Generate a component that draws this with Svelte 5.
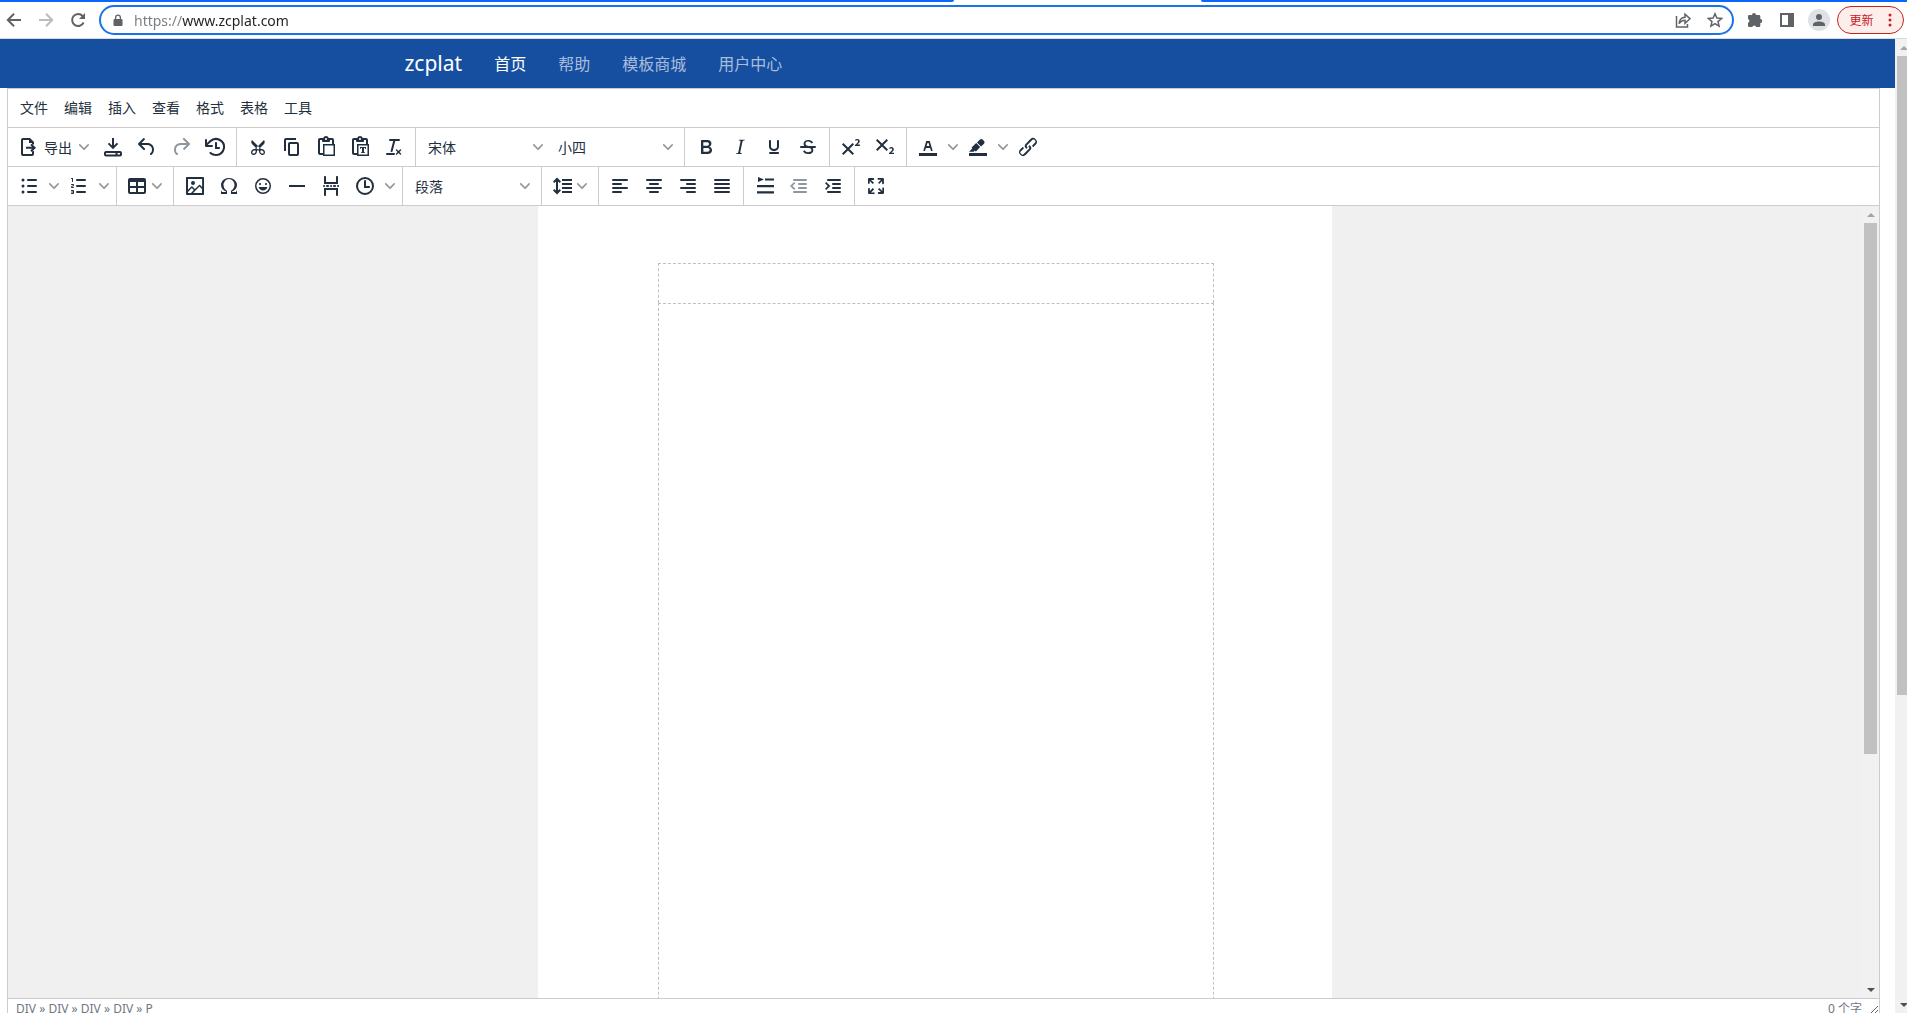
<script>
  const menus = ["文件", "编辑", "插入", "查看", "格式", "表格", "工具"]
  const links = ["首页", "帮助", "模板商城", "用户中心"]

  // 24x24 toolbar icons, "|" separates overlapping paths
  const icons = {
    export:
      "M5 5a2 2 0 0 1 2-2h7l4 4v2.5h-2V8h-3V5H7v14h9v-3h2v3a2 2 0 0 1-2 2H7a2 2 0 0 1-2-2zM10 11.8h6l-1.7-1.7 1.3-1.4 4.4 4.1-4.4 4.1-1.3-1.4 1.7-1.7h-6z",
    save: "M11 3h2v7.5l2.8-2.8 1.4 1.4L12 14.3 6.8 9.1l1.4-1.4L11 10.5zM5 16h14a2 2 0 0 1 2 2v1.5a2 2 0 0 1-2 2H5a2 2 0 0 1-2-2V18c0-1.1.9-2 2-2zm0 2v1.500h9.500V18zm11.500 0v1.500H19V18z",
    undo: "M6.4 8H12c3.7 0 6.2 2 6.8 5.1.6 2.7-.4 5.6-2.3 6.8a1 1 0 0 1-1-1.8c1.1-.6 1.8-2.7 1.4-4.6-.5-2.1-2.1-3.5-4.9-3.5H6.4l3.3 3.3a1 1 0 1 1-1.4 1.4l-5-5a1 1 0 0 1 0-1.4l5-5a1 1 0 0 1 1.4 1.4L6.4 8z",
    redo: "M17.6 10H12c-2.8 0-4.4 1.4-4.9 3.5-.4 2 .3 4 1.4 4.6a1 1 0 1 1-1 1.8c-2-1.2-2.9-4.1-2.3-6.8.6-3 3-5.1 6.8-5.1h5.6l-3.3-3.3a1 1 0 1 1 1.4-1.4l5 5a1 1 0 0 1 0 1.4l-5 5a1 1 0 0 1-1.4-1.4l3.3-3.3z",
    history:
      "M17 13c0 .6-.4 1-1 1h-4V8c0-.6.4-1 1-1s1 .4 1 1v4h2c.6 0 1 .4 1 1z|M4.7 10H9a1 1 0 0 1 0 2H3a1 1 0 0 1-1-1V5a1 1 0 1 1 2 0v3l2.5-2.4a9.2 9.2 0 0 1 10.8-1.5A9 9 0 0 1 13.4 21c-2.4.1-4.7-.7-6.5-2.2a1 1 0 1 1 1.3-1.5 7.2 7.2 0 0 0 11.6-3.7 7 7 0 0 0-3.5-7.7A7.2 7.2 0 0 0 8 7L4.7 10z",
    cut: "M18 15c.6.7 1 1.4 1 2.3 0 .8-.2 1.5-.7 2l-.8.5-1 .2c-.4 0-.8 0-1.2-.3a3.9 3.9 0 0 1-2.1-2.2c-.2-.5-.3-1-.2-1.5l-1-1-1 1c0 .5 0 1-.2 1.5-.1.5-.4 1-.9 1.4-.3.4-.7.6-1.2.8l-1.2.3c-.4 0-.7 0-1-.2-.3 0-.6-.3-.8-.5-.5-.5-.8-1.2-.7-2 0-.9.4-1.6 1-2.2A3.7 3.7 0 0 1 8.6 14H9l1-1-4-4-.5-1a3.3 3.3 0 0 1 0-2c0-.4.3-.7.5-1l6 6 6-6 .5 1a3.3 3.3 0 0 1 0 2c0 .4-.3.7-.5 1l-4 4 1 1h.5c.4 0 .8 0 1.2.3.5.2.9.4 1.2.8zm-8.5 2.2l.1-.4v-.7a1 1 0 0 0-.2-.5 1 1 0 0 0-.4-.2 1.6 1.6 0 0 0-.8 0 2.6 2.6 0 0 0-.8.3 2.5 2.5 0 0 0-.9 1.1l-.1.4v.7l.2.5.5.2h.7a2.5 2.5 0 0 0 .8-.3 2.8 2.8 0 0 0 .9-1.1zm2.5-2.8c.4 0 .7-.1 1-.4.3-.3.4-.6.4-1s-.1-.7-.4-1c-.3-.3-.6-.4-1-.4s-.7.1-1 .4c-.3.3-.4.6-.4 1s.1.7.4 1c.3.3.6.4 1 .4zm5.4 4l.2-.5v-.7a2.6 2.6 0 0 0-.3-.8 2.4 2.4 0 0 0-.7-.7 2.5 2.5 0 0 0-.8-.3 1.5 1.5 0 0 0-.8 0 1 1 0 0 0-.4.2 1 1 0 0 0-.2.5 1.5 1.5 0 0 0 0 .7v.4l.3.4.3.4a2.8 2.8 0 0 0 .8.5l.4.1h.7l.5-.2z",
    copy: "M16 3H6a2 2 0 0 0-2 2v11h2V5h10V3zm1 4a2 2 0 0 1 2 2v10a2 2 0 0 1-2 2h-7a2 2 0 0 1-2-2V9c0-1.2.9-2 2-2h7zm0 12V9h-7v10h7z",
    paste:
      "M18 9V5h-2v1c0 .6-.4 1-1 1H9a1 1 0 0 1-1-1V5H6v13h3V9h9zM9 20H6a2 2 0 0 1-2-2V5c0-1.1.9-2 2-2h3.2A3 3 0 0 1 12 1a3 3 0 0 1 2.8 2H18a2 2 0 0 1 2 2v4h1v12H9v-1zm1.5-9.5v9h9v-9h-9zM12 3a1 1 0 0 0-1 1c0 .5.4 1 1 1s1-.5 1-1-.4-1-1-1z",
    pasteText:
      "M18 9V5h-2v1c0 .6-.4 1-1 1H9a1 1 0 0 1-1-1V5H6v13h3V9h9zM9 20H6a2 2 0 0 1-2-2V5c0-1.1.9-2 2-2h3.2A3 3 0 0 1 12 1a3 3 0 0 1 2.8 2H18a2 2 0 0 1 2 2v4h1v12H9v-1zm1.5-9.5v9h9v-9h-9zM12 3a1 1 0 0 0-1 1c0 .5.4 1 1 1s1-.5 1-1-.4-1-1-1zm0 9h6v2h-.5l-.5-1h-1v4h.8v1h-3.6v-1h.8v-4h-1l-.5 1H12v-2z",
    clear:
      "M13.2 6a1 1 0 0 1 0 .2l-2.6 10a1 1 0 0 1-1 .8h-.2a.8.8 0 0 1-.8-1l2.6-10H8a1 1 0 1 1 0-2h9a1 1 0 0 1 0 2h-3.8zM5 18h7a1 1 0 0 1 0 2H5a1 1 0 0 1 0-2zm13 1.5L16.5 18 15 19.5a.7.7 0 0 1-1-1l1.5-1.5-1.5-1.5a.7.7 0 0 1 1-1l1.5 1.5 1.5-1.5a.7.7 0 0 1 1 1L17.5 17l1.5 1.5a.7.7 0 0 1-1 1z",
    bold: "M7.8 19c-.3 0-.5 0-.6-.2l-.2-.5V5.7c0-.2 0-.4.2-.5l.6-.2h5c1.5 0 2.7.3 3.5 1 .7.6 1.1 1.4 1.1 2.5a3 3 0 0 1-.6 1.9c-.4.6-1 1-1.6 1.2.4.1.9.3 1.3.6s.8.7 1 1.2c.4.4.5 1 .5 1.6 0 1.3-.4 2.3-1.3 3-.8.7-2.1 1-3.8 1H7.8zm5-8.3c.6 0 1.2-.1 1.6-.5.4-.3.6-.7.6-1.3 0-1.1-.8-1.7-2.3-1.7H9.3v3.5h3.4zm.5 6c.7 0 1.3-.1 1.7-.4.4-.4.6-.9.6-1.5s-.2-1-.7-1.4c-.4-.3-1-.4-2-.4H9.4v3.8h4z",
    italic:
      "M16.7 4.7l-.1.9h-.3c-.6 0-1 0-1.4.3-.3.3-.4.6-.5 1.1l-2.1 9.8v.6c0 .5.4.8 1.4.8h.2l-.2.8H8l.2-.8h.2c1.1 0 1.8-.5 2-1.5l2-9.8.1-.5c0-.6-.4-.8-1.4-.8h-.3l.2-.9h5.8z",
    underline:
      "M16 5c.6 0 1 .4 1 1v5.5a4 4 0 0 1-.4 1.8l-1 1.4a5.3 5.3 0 0 1-5.5 1 5 5 0 0 1-1.6-1c-.5-.4-.8-.9-1.1-1.4a4 4 0 0 1-.4-1.8V6c0-.6.4-1 1-1s1 .4 1 1v5.5c0 .3 0 .6.2 1l.6.7a3.3 3.3 0 0 0 2.2.8 3.4 3.4 0 0 0 2.2-.8c.3-.2.4-.5.6-.8l.2-.9V6c0-.6.4-1 1-1zM8 17h8c.6 0 1 .4 1 1s-.4 1-1 1H8a1 1 0 0 1 0-2z",
    strike:
      "M15.6 8.5c-.5-.7-1-1.1-1.3-1.3-.6-.4-1.3-.6-2-.6-2.7 0-2.8 1.7-2.8 2.1 0 1.6 1.8 2 3.2 2.3 4.4.9 4.6 2.8 4.6 3.9 0 1.4-.7 4.1-5 4.1A6.2 6.2 0 0 1 7 16.4l1.5-1.1c.4.6 1.6 2 3.7 2 1.6 0 2.5-.4 3-1.2.4-.8.3-2-.8-2.6-.7-.4-1.6-.7-2.9-1-1-.2-3.9-.8-3.9-3.6C7.6 6 10.3 5 12.4 5c2.9 0 4.2 1.6 4.7 2.4l-1.5 1.1z|M5 11h14a1 1 0 0 1 0 2H5a1 1 0 0 1 0-2z",
    sup: "M15 9.4L10.4 14l4.6 4.6-1.4 1.4L9 15.4 4.4 20 3 18.6 7.6 14 3 9.4 4.4 8 9 12.6 13.6 8 15 9.4zm5.9 1.6h-5v-1l1-.8 1.7-1.6c.3-.5.5-.9.5-1.3 0-.3 0-.5-.2-.7-.2-.2-.5-.3-.9-.3l-.8.2-.7.4-.4-1.2c.2-.2.5-.4 1-.5.3-.2.8-.2 1.2-.2.8 0 1.4.2 1.8.6.4.4.6 1 .6 1.6 0 .5-.2 1-.5 1.5l-1.3 1.4-.6.5h2.6V11z",
    sub: "M10.4 10l4.6 4.6-1.4 1.4L9 11.4 4.4 16 3 14.6 7.6 10 3 5.4 4.4 4 9 8.6 13.6 4 15 5.4 10.4 10zM21 19h-5v-1l1-.8 1.7-1.6c.4-.4.5-.8.5-1.2 0-.3 0-.6-.2-.7-.2-.2-.5-.3-.9-.3a2 2 0 0 0-.8.2l-.7.3-.4-1.1 1-.6 1.2-.2c.8 0 1.4.3 1.8.7.4.4.6.9.6 1.5s-.2 1.1-.5 1.6a8 8 0 0 1-1.3 1.3l-.6.6h2.6V19z",
    color:
      "M3 18h18v3H3zM8.7 16h-.8a.5.5 0 0 1-.5-.6l2.7-9c.1-.3.3-.4.5-.4h2.8c.2 0 .4.1.5.4l2.7 9a.5.5 0 0 1-.5.6h-.8a.5.5 0 0 1-.4-.4l-.7-2.2c0-.3-.3-.4-.5-.4h-3.4c-.2 0-.4.1-.5.4l-.7 2.2c0 .3-.2.4-.4.4zm2.6-7.6l-.6 2a.5.5 0 0 0 .5.6h1.6a.5.5 0 0 0 .5-.6l-.6-2c0-.3-.3-.4-.5-.4h-.4c-.2 0-.4.1-.5.4z",
    highlight:
      "M3 18h18v3H3z|M7.7 16.7H3l3.3-3.3-.7-.8L10.2 8l4 4.1-4 4.2c-.2.2-.6.2-.8 0l-.6-.7-1.1 1.1z|M12.7 9.2L11 7.4l3-2.9a2 2 0 0 1 2.6 0L18 6c.7.7.7 2 0 2.7l-2.9 2.9-1.8-1.8-.5-.6",
    link: "M6.2 12.3a1 1 0 0 1 1.4 1.4l-2.1 2a2 2 0 1 0 2.7 2.8l4.8-4.8a1 1 0 0 0 0-1.4 1 1 0 1 1 1.4-1.3 2.9 2.9 0 0 1 0 4L9.6 20a3.9 3.9 0 0 1-5.5-5.5l2-2zm11.6-.6a1 1 0 0 1-1.4-1.4l2-2a2 2 0 1 0-2.6-2.8L11 10.3a1 1 0 0 0 0 1.4A1 1 0 1 1 9.6 13a2.9 2.9 0 0 1 0-4L14.4 4a3.9 3.9 0 0 1 5.5 5.5l-2 2z",
    ul: "M11 5h8a1 1 0 0 1 0 2h-8a1 1 0 0 1 0-2zm0 6h8a1 1 0 0 1 0 2h-8a1 1 0 0 1 0-2zm0 6h8a1 1 0 0 1 0 2h-8a1 1 0 0 1 0-2zM6 4.5a1.5 1.5 0 1 1 0 3 1.5 1.5 0 0 1 0-3zm0 6a1.5 1.5 0 1 1 0 3 1.5 1.5 0 0 1 0-3zm0 6a1.5 1.5 0 1 1 0 3 1.5 1.5 0 0 1 0-3z",
    ol: "M10 17h8a1 1 0 0 1 0 2h-8a1 1 0 0 1 0-2zm0-6h8a1 1 0 0 1 0 2h-8a1 1 0 0 1 0-2zm0-6h8a1 1 0 0 1 0 2h-8a1 1 0 1 1 0-2zM6 4v3.5c0 .3-.2.5-.5.5a.5.5 0 0 1-.5-.5V5h-.5a.5.5 0 0 1 0-1H6zm-1 8.8l.2.2h1.3c.3 0 .5.2.5.5s-.2.5-.5.5H4.9a1 1 0 0 1-.9-1V13c0-.4.3-.8.6-1l1.2-.4.2-.3a.2.2 0 0 0-.2-.2H4.5a.5.5 0 0 1-.5-.5c0-.3.2-.5.5-.5h1.6c.5 0 .9.4.9 1v.1c0 .4-.3.8-.6 1l-1.2.4-.2.3zM7 17v2c0 .6-.4 1-1 1H4.5a.5.5 0 0 1 0-1h1.2c.2 0 .3-.1.3-.3 0-.2-.1-.3-.3-.3H4.4a.4.4 0 1 1 0-.8h1.3c.2 0 .3-.1.3-.3 0-.2-.1-.3-.3-.3H4.5a.5.5 0 1 1 0-1H6c.6 0 1 .4 1 1z",
    table:
      "M19 4a2 2 0 0 1 2 2v12a2 2 0 0 1-2 2H5a2 2 0 0 1-2-2V6c0-1.1.9-2 2-2h14zM5 14v4h6v-4H5zm14 0h-6v4h6v-4zm0-6h-6v4h6V8zM5 12h6V8H5v4z",
    image:
      "M5 15.7l3.3-3.2c.3-.3.7-.3 1 0L12 15l4.1-4c.3-.4.8-.4 1 0l2 1.9V5H5v10.7zM5 18V19h3l2.8-2.9-2-2L5 17.9zm14-3l-2.5-2.4-6.4 6.5H19v-4zM4 3h16c.6 0 1 .4 1 1v16c0 .6-.4 1-1 1H4a1 1 0 0 1-1-1V4c0-.6.4-1 1-1zm6 8a2 2 0 1 0 0-4 2 2 0 0 0 0 4z",
    omega:
      "M15 18h4l1-2v4h-6v-3.3l1.4-1a6 6 0 0 0 1.8-2.9 6.3 6.3 0 0 0-.1-4.1 5.8 5.8 0 0 0-3-3.2c-.6-.3-1.3-.5-2.1-.5a5.1 5.1 0 0 0-3.9 1.8 6.3 6.3 0 0 0-1.3 6 6.2 6.2 0 0 0 1.8 3l1.4.9V20H4v-4l1 2h4v-.5l-2-1L5.4 15A6.5 6.5 0 0 1 4 11c0-1 .2-1.9.6-2.7A7 7 0 0 1 7.8 5 8.2 8.2 0 0 1 12 4c1.5 0 3 .3 4.2 1a7 7 0 0 1 3.1 3.3c.5.8.7 1.7.7 2.7a6.5 6.5 0 0 1-1.4 4L17 16.6l-2 1v.5z",
    emoji:
      "M9 11c.6 0 1-.4 1-1s-.4-1-1-1a1 1 0 0 0-1 1c0 .6.4 1 1 1zm6 0c.6 0 1-.4 1-1s-.4-1-1-1a1 1 0 0 0-1 1c0 .6.4 1 1 1zm-3 5.5c2.1 0 4-1.5 4.4-3.5H7.6c.5 2 2.3 3.5 4.4 3.5zM12 4a8 8 0 1 0 0 16 8 8 0 0 0 0-16zm0 14.5a6.5 6.5 0 1 1 0-13 6.5 6.5 0 0 1 0 13z",
    hr: "M4 11h16v2H4z",
    pageBreak:
      "M5 11c.6 0 1 .4 1 1s-.4 1-1 1a1 1 0 0 1 0-2zm3 0h1c.6 0 1 .4 1 1s-.4 1-1 1H8a1 1 0 0 1 0-2zm4 0c.6 0 1 .4 1 1s-.4 1-1 1a1 1 0 0 1 0-2zm3 0h1c.6 0 1 .4 1 1s-.4 1-1 1h-1a1 1 0 0 1 0-2zm4 0c.6 0 1 .4 1 1s-.4 1-1 1a1 1 0 0 1 0-2zM7 3v5h10V3c0-.6.4-1 1-1s1 .4 1 1v7H5V3c0-.6.4-1 1-1s1 .4 1 1zM6 22a1 1 0 0 1-1-1v-7h14v7c0 .6-.4 1-1 1a1 1 0 0 1-1-1v-5H7v5c0 .6-.4 1-1 1z",
    time: "M12 19a7 7 0 1 0 0-14 7 7 0 0 0 0 14zm0 2a9 9 0 1 1 0-18 9 9 0 0 1 0 18z|M16 12h-3V7c0-.6-.4-1-1-1a1 1 0 0 0-1 1v7h5c.6 0 1-.4 1-1s-.4-1-1-1z",
    lineHeight:
      "M12 5h10v2H12zm0 4h10v2H12zm0 4h10v2H12zm0 4h10v2H12z|M7 3.5l4 4-1.3 1.6L8 7.4v9.2l1.7-1.7 1.3 1.6-4 4-4-4 1.3-1.6L6 16.600V7.400L4.300 9.100 3 7.500z",
    left: "M5 5h14a1 1 0 0 1 0 2H5a1 1 0 0 1 0-2zm0 4h8a1 1 0 0 1 0 2H5a1 1 0 0 1 0-2zm0 4h14a1 1 0 0 1 0 2H5a1 1 0 0 1 0-2zm0 4h8a1 1 0 0 1 0 2H5a1 1 0 0 1 0-2z",
    center:
      "M5 5h14a1 1 0 0 1 0 2H5a1 1 0 0 1 0-2zm3 4h8a1 1 0 0 1 0 2H8a1 1 0 0 1 0-2zm-3 4h14a1 1 0 0 1 0 2H5a1 1 0 0 1 0-2zm3 4h8a1 1 0 0 1 0 2H8a1 1 0 0 1 0-2z",
    right:
      "M5 5h14a1 1 0 0 1 0 2H5a1 1 0 0 1 0-2zm6 4h8a1 1 0 0 1 0 2h-8a1 1 0 0 1 0-2zm-6 4h14a1 1 0 0 1 0 2H5a1 1 0 0 1 0-2zm6 4h8a1 1 0 0 1 0 2h-8a1 1 0 0 1 0-2z",
    justify:
      "M5 5h14a1 1 0 0 1 0 2H5a1 1 0 0 1 0-2zm0 4h14a1 1 0 0 1 0 2H5a1 1 0 0 1 0-2zm0 4h14a1 1 0 0 1 0 2H5a1 1 0 0 1 0-2zm0 4h14a1 1 0 0 1 0 2H5a1 1 0 0 1 0-2z",
    firstLine: "M5 3l6 2.5L5 8zM12 4.500h9v2h-9zM4 11h17v2.200H4zM4 17.300h17v2.200H4z",
    outdent:
      "M7 5h12a1 1 0 0 1 0 2H7a1 1 0 0 1 0-2zm5 4h7a1 1 0 0 1 0 2h-7a1 1 0 0 1 0-2zm0 4h7a1 1 0 0 1 0 2h-7a1 1 0 0 1 0-2zm-5 4h12a1 1 0 0 1 0 2H7a1 1 0 0 1 0-2zM8.300 9.200L5.500 12l2.800 2.800-1.200 1.200L3 12l4.100-4z",
    indent:
      "M7 5h12a1 1 0 0 1 0 2H7a1 1 0 0 1 0-2zm5 4h7a1 1 0 0 1 0 2h-7a1 1 0 0 1 0-2zm0 4h7a1 1 0 0 1 0 2h-7a1 1 0 0 1 0-2zm-5 4h12a1 1 0 0 1 0 2H7a1 1 0 0 1 0-2zM4 14.800L6.800 12 4 9.200 5.200 8l4.100 4-4.100 4z",
    fullscreen:
      "M15.3 10l-1.2-1.3 2.9-3h-2.3a.9.9 0 1 1 0-1.7H19c.5 0 .9.4.9.9v4.4a.9.9 0 1 1-1.8 0V7l-2.9 3zm0 4l3 3v-2.3a.9.9 0 1 1 1.7 0V19c0 .5-.4.9-.9.9h-4.4a.9.9 0 1 1 0-1.8H17l-3-2.9 1.3-1.2zM10 15.4l-2.9 3h2.3a.9.9 0 1 1 0 1.7H5a.9.9 0 0 1-.9-.9v-4.4a.9.9 0 1 1 1.8 0V17l2.9-3 1.2 1.3zM8.7 10L5.7 7v2.3a.9.9 0 0 1-1.7 0V5c0-.5.4-.9.9-.9h4.4a.9.9 0 0 1 0 1.8H7l3 2.9-1.3 1.2z",
  }

  const toolbars = [
    [
      [
        { icon: "export", title: "导出", text: "导出", menu: true },
        { icon: "save", title: "保存" },
        { icon: "undo", title: "撤销" },
        { icon: "redo", title: "重做", disabled: true },
        { icon: "history", title: "恢复草稿" },
      ],
      [
        { icon: "cut", title: "剪切" },
        { icon: "copy", title: "复制" },
        { icon: "paste", title: "粘贴" },
        { icon: "pasteText", title: "粘贴为文本" },
        { icon: "clear", title: "清除格式" },
      ],
      [
        { select: ["宋体", "黑体", "楷体"], title: "字体" },
        { select: ["小四", "四号", "五号"], title: "字号" },
      ],
      [
        { icon: "bold", title: "粗体" },
        { icon: "italic", title: "斜体" },
        { icon: "underline", title: "下划线" },
        { icon: "strike", title: "删除线" },
      ],
      [
        { icon: "sup", title: "上标" },
        { icon: "sub", title: "下标" },
      ],
      [
        { icon: "color", title: "文字颜色", split: true },
        { icon: "highlight", title: "背景色", split: true },
        { icon: "link", title: "链接" },
      ],
    ],
    [
      [
        { icon: "ul", title: "项目符号", split: true },
        { icon: "ol", title: "编号列表", split: true },
      ],
      [{ icon: "table", title: "表格", menu: true }],
      [
        { icon: "image", title: "图片" },
        { icon: "omega", title: "特殊字符" },
        { icon: "emoji", title: "表情" },
        { icon: "hr", title: "水平线" },
        { icon: "pageBreak", title: "分页符" },
        { icon: "time", title: "日期时间", split: true },
      ],
      [{ select: ["段落", "标题1", "标题2"], title: "段落格式" }],
      [{ icon: "lineHeight", title: "行高", menu: true }],
      [
        { icon: "left", title: "左对齐" },
        { icon: "center", title: "居中" },
        { icon: "right", title: "右对齐" },
        { icon: "justify", title: "两端对齐" },
      ],
      [
        { icon: "firstLine", title: "首行缩进" },
        { icon: "outdent", title: "减少缩进", disabled: true },
        { icon: "indent", title: "增加缩进" },
      ],
      [{ icon: "fullscreen", title: "全屏" }],
    ],
  ]
</script>

{#snippet icon(name)}
  <svg class="icon" viewBox="0 0 24 24" fill-rule="evenodd">
    {#each icons[name].split("|") as d}
      <path {d} />
    {/each}
  </svg>
{/snippet}

{#snippet chevron()}
  <svg class="chevron" viewBox="0 0 10 10">
    <path
      d="M8.7 2.2c.3-.3.8-.3 1 0 .4.4.4.9 0 1.2L5.7 7.8c-.3.3-.9.3-1.2 0L.2 3.4a.8.8 0 0 1 0-1.2c.3-.3.8-.3 1.1 0L5 6l3.7-3.8z"
    />
  </svg>
{/snippet}

{#snippet scrollbar(size)}
  <div class="scrollbar" aria-hidden="true">
    <span class="arrow up"></span>
    <div class="track"><div class="thumb" style="height: {size}%"></div></div>
    <span class="arrow down"></span>
  </div>
{/snippet}

<div class="window">
  <header class="browser">
    <div class="tabs"><i></i><i></i></div>
    <div class="bar">
      <div class="nav-buttons">
        <button aria-label="后退">
          <svg viewBox="0 0 16 16"><path d="M15 8H2.500M8 1.800L1.800 8 8 14.200" /></svg>
        </button>
        <button aria-label="前进" class="off">
          <svg viewBox="0 0 16 16"><path d="M1 8h12.500M8 1.800L14.200 8 8 14.200" /></svg>
        </button>
        <button aria-label="刷新">
          <svg viewBox="0 0 16 16">
            <path d="M13.600 10.500A6 6 0 1 1 12.600 4" />
            <path class="solid" d="M15 1v6H9z" />
          </svg>
        </button>
      </div>
      <div class="address">
        <svg class="lock" viewBox="0 0 10 12">
          <path d="M1.500 5H2V3.500a3 3 0 0 1 6 0V5h.5A1 1 0 0 1 9.500 6v5a1 1 0 0 1-1 1h-7a1 1 0 0 1-1-1V6a1 1 0 0 1 1-1zM3.300 5h3.400V3.500a1.700 1.700 0 0 0-3.400 0z" />
        </svg>
        <input aria-label="地址" value="https://www.zcplat.com" />
        <button aria-label="分享">
          <svg viewBox="0 0 16 16">
            <path class="thin" d="M1.500 4v11h11v-3M4 11.500c.5-4 2.500-6 6-6.200V2.200l5 4.500-5 4.500V8.300c-2.600 0-4.500 1-6 3.200z" />
          </svg>
        </button>
        <button aria-label="收藏">
          <svg viewBox="0 0 16 16">
            <path class="thin" d="M8 1.800l1.900 4.300 4.700.4-3.600 3.100 1.100 4.600L8 11.700l-4.100 2.500L5 9.600 1.400 6.500l4.700-.4z" />
          </svg>
        </button>
      </div>
      <div class="tools">
        <button aria-label="扩展程序">
          <svg viewBox="0 0 16 16">
            <path class="fill" d="M5 3a2 2 0 0 1 4 0h3a1.300 1.300 0 0 1 1.300 1.300V7a2 2 0 0 1 0 4v2.700A1.300 1.300 0 0 1 12 15H9.200a2 2 0 0 0-3.900 0H2.400A1.300 1.300 0 0 1 1 13.700v-3a2 2 0 0 0 0-3.800V4.300A1.300 1.300 0 0 1 2.400 3z" />
          </svg>
        </button>
        <button aria-label="侧边栏">
          <svg viewBox="0 0 16 16"><path class="fill" fill-rule="evenodd" d="M1 1h14v14H1zm2 2v10h6V3z" /></svg>
        </button>
        <button aria-label="账户" class="avatar">
          <svg viewBox="0 0 16 16"><circle cx="8" cy="5" r="3" /><path class="fill" d="M2 14v-1.500C2 10.500 5 9.400 8 9.400s6 1.100 6 3.100V14z" /></svg>
        </button>
        <button class="update">更新<svg viewBox="0 0 4 14"><circle cx="2" cy="2" r="1.500" /><circle cx="2" cy="7" r="1.500" /><circle cx="2" cy="12" r="1.500" /></svg></button>
      </div>
    </div>
  </header>

  <div class="viewport">
    <div class="site">
      <nav>
        <div class="container">
          <a class="brand" href="#top">zcplat</a>
          {#each links as link, i}
            <a href="#top" class:active={i === 0}>{link}</a>
          {/each}
        </div>
      </nav>

      <main class="editor">
        <div class="menubar">
          {#each menus as menu}
            <button>{menu}</button>
          {/each}
        </div>

        {#each toolbars as groups}
          <div class="toolbar">
            {#each groups as items}
              <div class="group">
                {#each items as item}
                  {#if item.select}
                    <label class="select">
                      <select aria-label={item.title}>
                        {#each item.select as option}
                          <option>{option}</option>
                        {/each}
                      </select>
                      {@render chevron()}
                    </label>
                  {:else}
                    <button class="tbtn" class:menu={item.menu} title={item.title} disabled={item.disabled}>
                      {@render icon(item.icon)}
                      {#if item.text}<span>{item.text}</span>{/if}
                      {#if item.menu}{@render chevron()}{/if}
                    </button>
                    {#if item.split}
                      <button class="split" aria-label="{item.title}选项">{@render chevron()}</button>
                    {/if}
                  {/if}
                {/each}
              </div>
            {/each}
          </div>
        {/each}

        <div class="canvas">
          <div class="desk">
            <div class="page">
              <div class="page-header"></div>
              <div class="page-body"></div>
            </div>
          </div>
          {@render scrollbar(70)}
        </div>

        <footer>
          <span>DIV » DIV » DIV » DIV » P</span>
          <span class="count">0 个字</span>
          <svg class="grip" viewBox="0 0 8 8"><path d="M1 8l7-7M5 8l3-3" /></svg>
        </footer>
      </main>
    </div>
    {@render scrollbar(68)}
  </div>
</div>

<style>
  :global(body) {
    margin: 0;
    overflow: hidden;
  }
  .window {
    display: flex;
    flex-direction: column;
    height: 100vh;
    overflow: hidden;
    background: #fff;
    color: #222f3e;
    font-family: "Noto Sans", "Noto Sans CJK SC", sans-serif;
    font-size: 14px;
  }
  button,
  input,
  select {
    margin: 0;
    padding: 0;
    border: 0;
    background: none;
    color: inherit;
    font: inherit;
  }
  button {
    display: flex;
    align-items: center;
    justify-content: center;
  }
  a {
    color: inherit;
    text-decoration: none;
  }

  /* browser chrome */
  .tabs {
    display: flex;
    justify-content: space-between;
    height: 2px;
  }
  .tabs i {
    width: 50%;
    background: #0b66fb;
    border-bottom-right-radius: 4px;
  }
  .tabs i + i {
    width: 37%;
    border-radius: 0 0 0 4px;
  }
  .bar {
    display: flex;
    align-items: center;
    height: 36px;
    border-bottom: 1px solid #d8dadd;
  }
  .nav-buttons {
    display: flex;
    gap: 16px;
    padding: 0 13px 0 6px;
  }
  .bar button svg {
    width: 16px;
    height: 16px;
    fill: none;
    stroke: #5f6368;
    stroke-width: 2;
  }
  .bar .off svg {
    stroke: #babcbe;
  }
  .bar .solid {
    fill: #5f6368;
    stroke: none;
  }
  .bar .thin {
    stroke-width: 1.5;
  }
  .bar .fill,
  .bar circle {
    fill: #5f6368;
    stroke: none;
  }
  .address {
    display: flex;
    flex: 1;
    align-items: center;
    gap: 16px;
    height: 26px;
    padding: 0 9px 0 12px;
    border: 2px solid #1a73e8;
    border-radius: 15px;
  }
  .lock {
    width: 10px;
    height: 12px;
    margin-right: -5px;
    fill: #5f6368;
  }
  /* scheme is grey, host is dark */
  .address input {
    flex: 1;
    min-width: 0;
    height: 24px;
    outline: 0;
    background: linear-gradient(90deg, #777b80 48px, #202124 48px) text;
    color: transparent;
  }
  .tools {
    display: flex;
    align-items: center;
    gap: 16px;
    padding: 0 3px 0 13px;
  }
  .bar .avatar {
    width: 22px;
    height: 22px;
    margin: 0 -9px 0 -3px;
    border-radius: 50%;
    background: #dee1e6;
  }
  .update {
    gap: 14px;
    width: 67px;
    height: 28px;
    box-sizing: border-box;
    border: 1px solid #c5221f;
    border-radius: 14px;
    background: #fdeeec;
    color: #c5221f;
    font-size: 12px;
  }
  .bar .update svg {
    width: 4px;
    height: 14px;
  }
  .bar .update circle {
    fill: #c5221f;
  }

  /* scrollbars */
  .scrollbar {
    display: flex;
    flex: 0 0 17px;
    flex-direction: column;
    background: #f1f1f1;
  }
  .track {
    flex: 1;
    padding: 0 2px;
  }
  .thumb {
    background: #c1c1c1;
  }
  .arrow {
    display: flex;
    align-items: center;
    justify-content: center;
    height: 17px;
  }
  .arrow::before {
    content: "";
    border: 4px solid transparent;
    border-top: 0;
    border-bottom-color: #a3a3a3;
  }
  .arrow.down::before {
    border-top: 4px solid #505050;
    border-bottom: 0;
  }

  /* site */
  .viewport {
    display: flex;
    flex: 1;
    min-height: 0;
    margin-right: -5px;
  }
  .site {
    display: flex;
    flex: 1;
    flex-direction: column;
    min-width: 0;
  }
  nav {
    background: #164fa0;
  }
  .container {
    display: flex;
    align-items: center;
    gap: 32px;
    max-width: 1086px;
    height: 47px;
    margin: 0 auto;
    padding-bottom: 2px;
    color: #a8bddd;
    font-size: 16px;
  }
  .container .active,
  .container .brand {
    color: #fff;
  }
  .brand {
    font-size: 21px;
  }

  .editor {
    display: flex;
    flex: 1;
    flex-direction: column;
    min-height: 0;
    margin: 0 15px 0 7px;
    border: solid #ccc;
    border-width: 1px 1px 0;
  }
  .menubar,
  .toolbar {
    display: flex;
    height: 38px;
    border-bottom: 1px solid #ccc;
  }
  .menubar {
    padding: 0 4px;
  }
  .menubar button {
    padding: 0 8px 2px;
  }
  .group {
    display: flex;
    align-items: center;
    padding: 0 4px;
    border-right: 1px solid #ccc;
  }
  .group:last-child {
    border-right: 0;
  }
  .tbtn {
    width: 34px;
    height: 34px;
  }
  .tbtn.menu {
    width: auto;
    padding: 0 4px;
  }
  .tbtn span {
    margin: 0 4px;
  }
  .icon {
    width: 24px;
    height: 24px;
    fill: #222f3e;
  }
  .tbtn:disabled .icon {
    opacity: 0.5;
  }
  .chevron {
    width: 10px;
    height: 10px;
    margin: 0 3px;
    fill: #222f3e;
    opacity: 0.5;
    pointer-events: none;
  }
  .select {
    display: flex;
    align-items: center;
    padding: 0 4px;
  }
  .select select {
    width: 98px;
    height: 34px;
    margin: 0 4px;
    appearance: none;
  }

  .canvas {
    display: flex;
    flex: 1;
    min-height: 0;
    border-bottom: 1px solid #ccc;
  }
  .desk {
    flex: 1;
    overflow: hidden;
    background: #f0f0f0;
  }
  .page {
    display: flex;
    flex-direction: column;
    box-sizing: border-box;
    width: 794px;
    max-width: 100%;
    height: 1123px;
    margin: 0 auto;
    padding: 57px 118px 0 120px;
    background: #fff;
  }
  .page-header {
    height: 39px;
    border: 1px dashed #c0c0c0;
    border-bottom: 0;
  }
  .page-body {
    flex: 1;
    border: 1px dashed #c0c0c0;
  }

  footer {
    display: flex;
    height: 14px;
    padding: 0 1px 0 8px;
    color: #6f7782;
    font-size: 12px;
    line-height: 20px;
  }
  .count {
    margin-left: auto;
  }
  .grip {
    width: 8px;
    height: 8px;
    margin: 6px 0 0 8px;
    stroke: #59626e;
  }
</style>
